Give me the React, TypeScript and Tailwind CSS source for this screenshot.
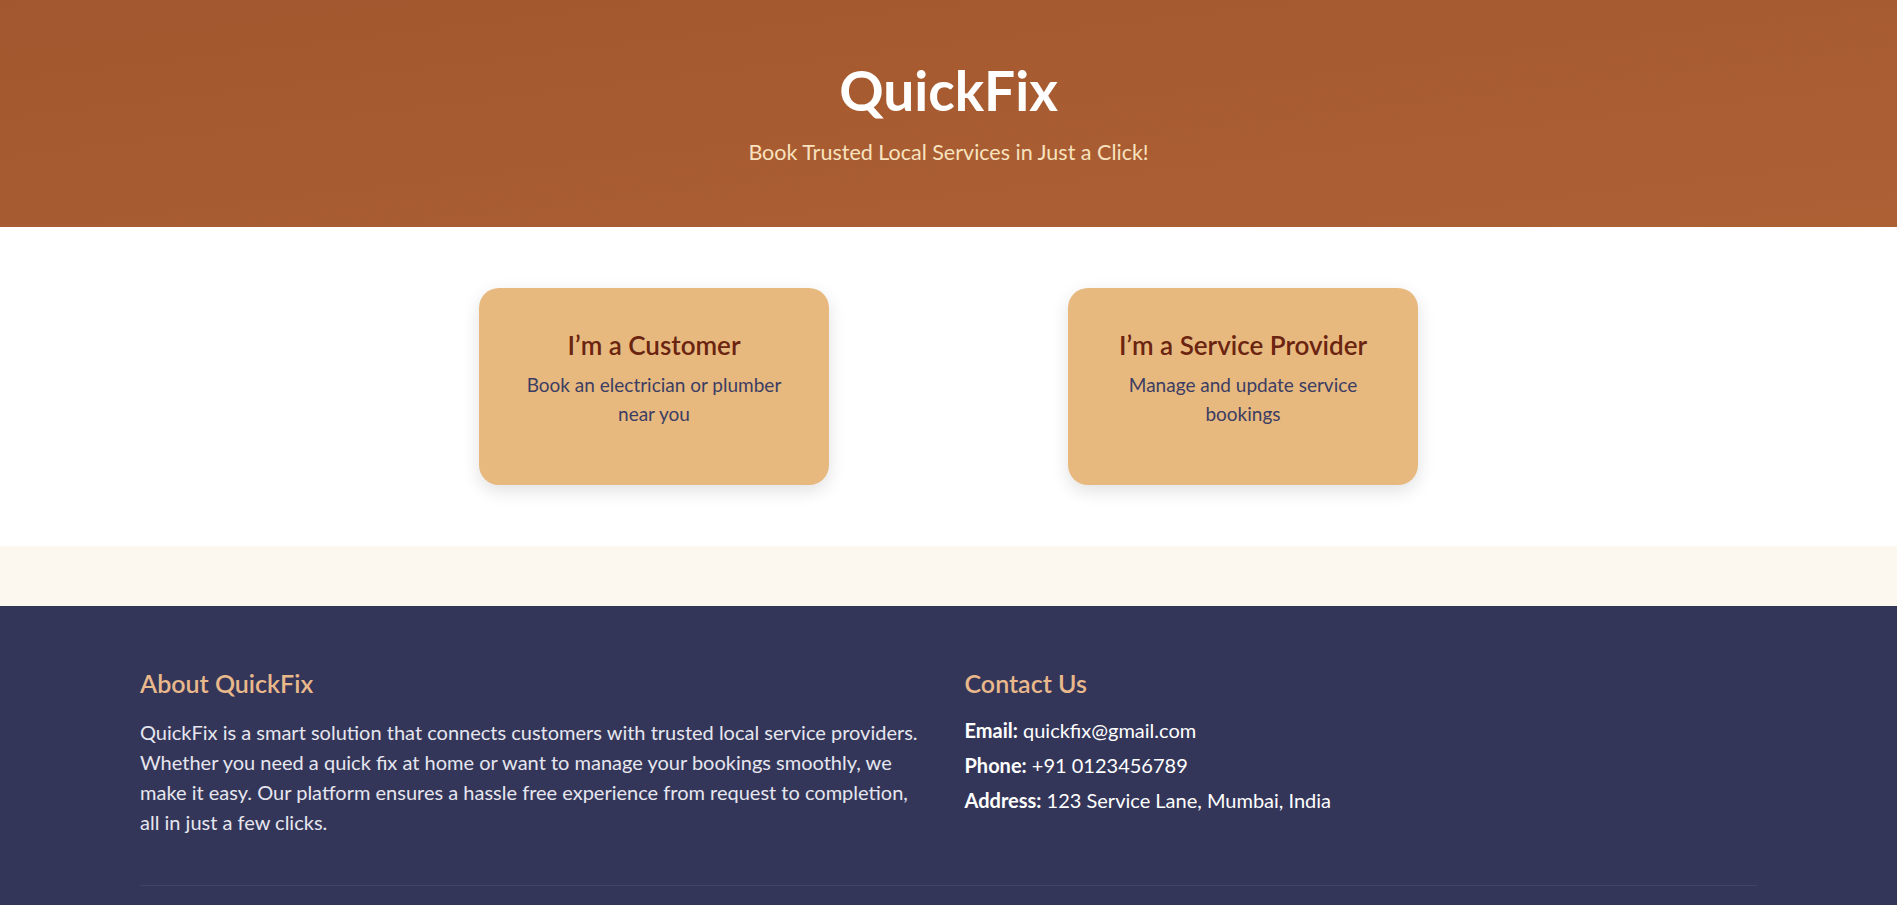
const font = { fontFamily: '"Segoe UI", Lato, "Open Sans", sans-serif' };

const roles = [
  { title: "I’m a Customer", text: "Book an electrician or plumber near you" },
  { title: "I’m a Service Provider", text: "Manage and update service bookings" },
];

export default function App() {
  return (
    <div className="min-h-screen bg-[#343659]" style={font}>
      <header className="h-[227px] bg-gradient-to-br from-[#a3572e] to-[#ad6034] flex flex-col items-center pt-[62px]">
        <h1 className="text-[55px] font-bold text-white leading-[56px]">QuickFix</h1>
        <p className="mt-[20px] text-[21.5px] text-[#f8e2bf] leading-[28px]">
          Book Trusted Local Services in Just a Click!
        </p>
      </header>

      <section className="bg-white py-[61px] flex justify-center gap-[239px]">
        {roles.map((r) => (
          <div
            key={r.title}
            className="w-[350px] h-[197px] rounded-[20px] bg-[#e7b97f] shadow-[0_6px_18px_rgba(0,0,0,0.12)] px-9 pt-[41px] text-center cursor-pointer"
          >
            <h2 className="text-[26px] font-semibold text-[#6a2410] leading-[32px]">{r.title}</h2>
            <p className="mt-[9px] text-[19px] leading-[29px] text-[#3c3d63]">{r.text}</p>
          </div>
        ))}
      </section>

      <div className="h-[60px] bg-[#fcf8f0]" />

      <footer className="bg-[#343659] pt-[61px] px-[140px] pb-10">
        <div className="grid grid-cols-2 gap-8">
          <div className="pr-[12px]">
            <h3 className="text-[25px] font-semibold text-[#e9b88b] leading-[32px]">About QuickFix</h3>
            <p className="mt-[18px] text-[20px] leading-[30px] text-[#e6e6ef]">
              QuickFix is a smart solution that connects customers with trusted local service providers.
              Whether you need a quick fix at home or want to manage your bookings smoothly, we make it
              easy. Our platform ensures a hassle free experience from request to completion, all in just
              a few clicks.
            </p>
          </div>
          <div>
            <h3 className="text-[25px] font-semibold text-[#e9b88b] leading-[32px]">Contact Us</h3>
            <ul className="mt-[18px] text-[20px] leading-[27px] text-white flex flex-col gap-[8px]">
              <li>
                <b>Email:</b> quickfix@gmail.com
              </li>
              <li>
                <b>Phone:</b> +91 0123456789
              </li>
              <li>
                <b>Address:</b> 123 Service Lane, Mumbai, India
              </li>
            </ul>
          </div>
        </div>
        <div className="mt-[48px] border-t border-[#41436a]" />
      </footer>
    </div>
  );
}
